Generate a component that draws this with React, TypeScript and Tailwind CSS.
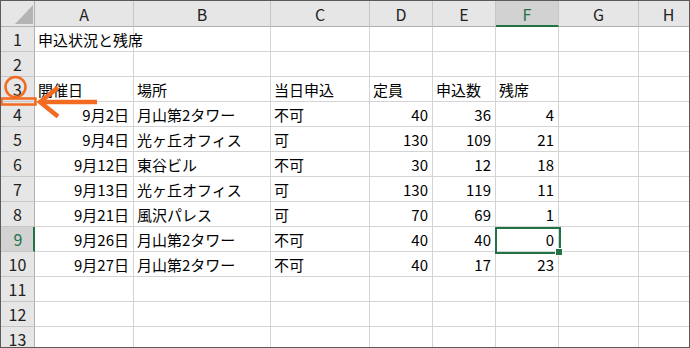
import React from "react";

const cols = ["A", "B", "C", "D", "E", "F", "G", "H"];
type Cell = { t: string; r?: boolean };
const L = (t: string): Cell => ({ t });
const R = (t: string): Cell => ({ t, r: true });

const rows: Cell[][] = [
  [L("申込状況と残席")],
  [],
  [L("開催日"), L("場所"), L("当日申込"), L("定員"), L("申込数"), L("残席")],
  [R("9月2日"), L("月山第2タワー"), L("不可"), R("40"), R("36"), R("4")],
  [R("9月4日"), L("光ヶ丘オフィス"), L("可"), R("130"), R("109"), R("21")],
  [R("9月12日"), L("東谷ビル"), L("不可"), R("30"), R("12"), R("18")],
  [R("9月13日"), L("光ヶ丘オフィス"), L("可"), R("130"), R("119"), R("11")],
  [R("9月21日"), L("風沢パレス"), L("可"), R("70"), R("69"), R("1")],
  [R("9月26日"), L("月山第2タワー"), L("不可"), R("40"), R("40"), R("0")],
  [R("9月27日"), L("月山第2タワー"), L("不可"), R("40"), R("17"), R("23")],
  [],
  [],
  [],
];

export default function App() {
  return (
    <div
      className="relative w-[690px] h-[348px] overflow-hidden border border-[#5b5b5b] bg-white text-[15px] text-black"
      style={{ fontFamily: '"Noto Sans CJK JP", "Noto Sans", sans-serif' }}
    >
      <div className="grid grid-cols-[34px_99px_137px_99px_63px_63px_63px_80px_60px] auto-rows-[25px] grid-rows-[26px]">
        {/* corner */}
        <div className="relative bg-[#e6e6e6] border-r border-b border-[#b1b1b1]">
          <svg className="absolute left-[14px] top-[4px]" width="18" height="19" viewBox="0 0 18 19">
            <polygon points="18,0 18,19 0,19" fill="#b4b4b4" />
          </svg>
        </div>
        {cols.map((c) => (
          <div
            key={c}
            className={
              c === "F"
                ? "flex items-center justify-center bg-[#d2d2d2] border-r border-[#c6c6c6] border-b-2 border-b-[#217346] text-[#217346] text-[16px] leading-none pt-[1px]"
                : "flex items-center justify-center bg-[#e6e6e6] border-r border-[#c6c6c6] border-b border-b-[#b1b1b1] text-[#222] text-[16px] leading-none"
            }
          >
            {c}
          </div>
        ))}
        {rows.map((row, i) => (
          <React.Fragment key={i}>
            <div
              className={
                i === 8
                  ? "flex items-center justify-center bg-[#d2d2d2] border-b border-[#c6c6c6] border-r-2 border-r-[#217346] text-[#217346] text-[16px] leading-none pl-[2px]"
                  : "flex items-center justify-center bg-[#e6e6e6] border-b border-[#c6c6c6] border-r border-r-[#b1b1b1] text-[#222] text-[16px] leading-none"
              }
            >
              {i + 1}
            </div>
            {cols.map((c, j) => {
              const cell = row[j];
              return (
                <div
                  key={c}
                  className={
                    "flex items-center whitespace-nowrap leading-none border-b border-[#d4d4d4] " +
                    (j < 7 ? "border-r " : "") +
                    (cell && cell.r ? "justify-end pr-[4px]" : "justify-start pl-[3px]")
                  }
                >
                  {cell ? cell.t : ""}
                </div>
              );
            })}
          </React.Fragment>
        ))}
      </div>

      {/* selection */}
      <div className="absolute left-[494px] top-[226px] w-[66px] h-[27px] border-2 border-[#217346]" />
      <div className="absolute left-[554px] top-[247px] w-[8px] h-[8px] bg-[#217346] border border-white" />

      {/* annotation */}
      <svg className="absolute -left-px -top-px" width="690" height="348" viewBox="0 0 690 348">
        <circle cx="15.5" cy="87" r="10" fill="none" stroke="#f26b21" strokeWidth="2.5" />
        <rect x="1.5" y="98.5" width="34" height="6" fill="none" stroke="#f26b21" strokeWidth="2.5" />
        <line x1="41" y1="102" x2="97" y2="102" stroke="#f26b21" strokeWidth="4.5" />
        <polyline points="58,87.5 40,102 58,116.5" fill="none" stroke="#f26b21" strokeWidth="4.5" strokeLinejoin="miter" />
      </svg>
    </div>
  );
}
